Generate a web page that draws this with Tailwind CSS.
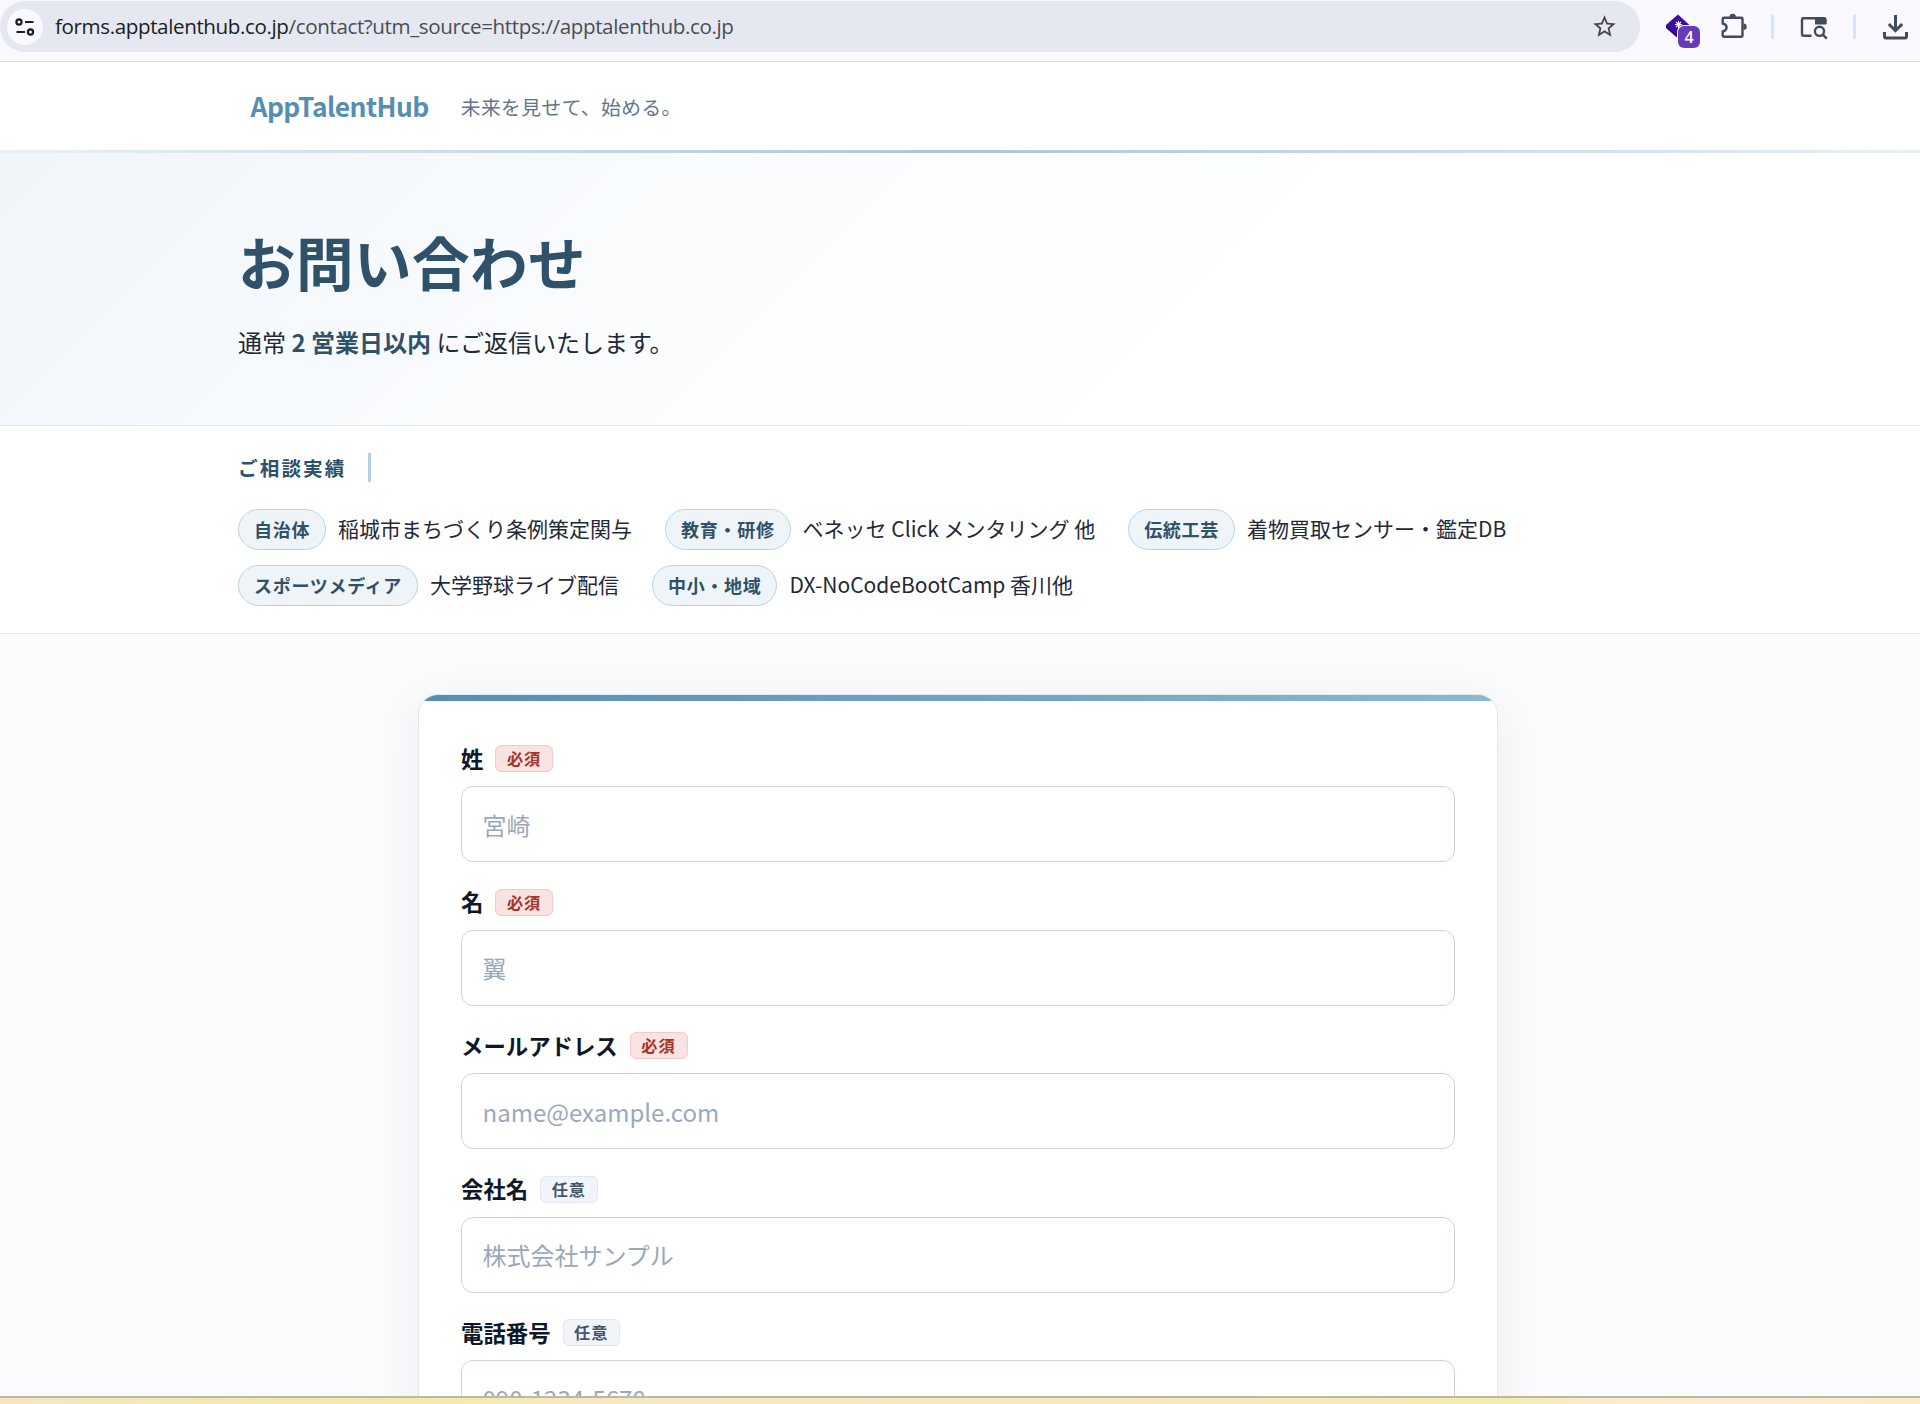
<!DOCTYPE html>
<html lang="ja">
<head>
    <meta charset="UTF-8">
    <meta name="viewport" content="width=device-width, initial-scale=1.0">
    <title>お問い合わせ | AppTalentHub</title>
    <script src="https://cdn.jsdelivr.net/npm/@tailwindcss/browser@4"></script>
</head>
<body class="h-[1404px] overflow-hidden bg-[#f9fbfd] font-['Noto_Sans_CJK_JP',sans-serif] text-[#1f2937] flex flex-col">
    <!-- Browser toolbar -->
    <div class="h-[62px] shrink-0 bg-[#faf9ff] border-b border-[#dcdcea] flex items-start pt-px">
        <div class="w-[1640px] h-[51px] rounded-[25px] bg-[#e5e8f1] flex items-center pl-[7px] pr-[22px]">
            <span class="w-9 h-9 rounded-full bg-[#faf9ff] flex items-center justify-center">
                <svg class="w-[20px] h-[20px]" viewBox="0 0 20 20" fill="none" stroke="#1c1d21" stroke-width="2.2">
                    <circle cx="4" cy="5" r="2.6" /><path d="M10 5h8.500M1.500 15H10" /><circle cx="15.500" cy="15" r="2.600" />
                </svg>
            </span>
            <span class="ml-3 text-[20.600px] tracking-[-0.390px] leading-none whitespace-nowrap text-[#1c1d21] font-['Open_Sans',sans-serif]">forms.apptalenthub.co.jp<span class="text-[#4a4d55]">/contact?utm_source=https://apptalenthub.co.jp</span></span>
            <svg class="ml-auto w-[27px] h-[27px]" viewBox="0 0 24 24" fill="#474747">
                <path d="M22 9.240l-7.190-.620L12 2 9.190 8.630 2 9.240l5.460 4.730L5.820 21 12 17.270 18.180 21l-1.630-7.030L22 9.240zM12 15.400l-3.760 2.270 1-4.280-3.320-2.880 4.380-.380L12 6.100l1.710 4.040 4.380.380-3.320 2.880 1 4.280L12 15.400z" />
            </svg>
        </div>
        <div class="relative ml-[25px] mt-[12px] w-[36px] h-[36px]">
            <svg class="w-[28px] h-[28px]" viewBox="0 0 28 28">
                <path d="M13 1.500L25.500 13 13 24.500 1 14V12z" fill="#4009a8" />
                <path d="M1 13v2l11 9.500 1-2z" fill="#22046b" />
                <path d="M13.500 8v7M10 11.500h7M11 9l5 5M16 9l-5 5" stroke="#fff" stroke-width="1.100" />
            </svg>
            <span class="absolute left-[13px] top-[13px] w-[22px] h-[22px] rounded-[6px] bg-[#673ab7] ring-1 ring-white text-white text-[16px] font-semibold leading-[23px] text-center font-['Open_Sans',sans-serif]">4</span>
        </div>
        <svg class="ml-[20px] mt-[12px] w-[27px] h-[27px]" viewBox="0 0 27 27" fill="none" stroke="#434a5b" stroke-width="2.400">
            <path d="M4 4.800H20.300Q21.500 4.800 21.500 6V22.500Q21.500 23.700 20.300 23.700H3Q1.700 23.700 1.700 22.500V18.500Q5.600 17.500 5.600 14.500T1.700 10.500V6Q1.700 4.800 3 4.800z" />
            <path d="M8.500 4a3.200 3.200 0 0 1 6.400 0zM22.500 10.500a3.200 3.200 0 0 1 0 6.400z" fill="#434a5b" stroke="none" />
        </svg>
        <span class="ml-[23px] mt-[13px] w-[3px] h-[25px] rounded-full bg-[#d7e3fc]"></span>
        <svg class="ml-[26px] mt-[14px] w-[28px] h-[26px]" viewBox="0 0 28 26" fill="none" stroke="#434a5b" stroke-width="2.400">
            <path d="M11.500 20.700H3.200Q2 20.700 2 19.500V4.500Q2 3.200 3.200 3.200H24.500Q25.500 3.200 25.500 4.500V9" />
            <path d="M15 3h11v6.500H15z" fill="#434a5b" stroke="none" />
            <circle cx="19.500" cy="16.300" r="4.600" /><path d="M22.800 19.600l4 4" />
        </svg>
        <span class="ml-[25px] mt-[13px] w-[3px] h-[25px] rounded-full bg-[#d7e3fc]"></span>
        <svg class="ml-[27px] mt-[13px] w-[25px] h-[26px] shrink-0" viewBox="0 0 25 26" fill="none" stroke="#434a5b" stroke-width="3">
            <path d="M12.500 1v15M5.800 10l6.700 6.700 6.700-6.700M1.500 18v4.500Q1.500 24 3 24H22Q23.500 24 23.500 22.500V18" />
        </svg>
    </div>

    <!-- Site header -->
    <header class="h-[88px] shrink-0 bg-white flex items-center pl-[250.500px]">
        <a class="text-[26.400px] tracking-[-0.540px] leading-none font-bold text-[#548eb3]">AppTalentHub</a>
        <p class="ml-8 pt-[2px] text-[19.800px] tracking-[0.400px] leading-none text-[#64748b]">未来を見せて、始める。</p>
    </header>
    <div class="h-[3px] shrink-0 bg-linear-to-r from-[#e8f0f5] via-[#a9c8da] to-[#e8f0f5]"></div>

    <!-- Hero -->
    <section class="h-[273px] shrink-0 border-b border-[#e2e8f0] bg-linear-135 from-[#f0f5fa] via-[#fafcfe] via-35% to-white to-65% pl-[238px]">
        <h1 class="pt-[66px] text-[57.600px] tracking-[0.400px] leading-[84px] font-bold text-[#2f5169]">お問い合わせ</h1>
        <p class="mt-[21px] text-[24px] leading-[36px]">通常 <strong class="text-[#2f5169]">2 営業日以内</strong> にご返信いたします。</p>
    </section>

    <!-- Track record -->
    <section class="h-[208px] shrink-0 bg-white border-b border-[#e2e8f0] pl-[238px] pt-[27px]">
        <h2 class="w-[133px] h-[29px] border-r-3 border-[#b5d2e3] text-[19.600px] tracking-[2.100px] leading-[30px] font-bold text-[#2f5169]">ご相談実績</h2>
        <ul class="mt-[27px] w-[1442px] flex flex-wrap gap-x-[33px] gap-y-[15px] text-[21px]">
            <li class="flex items-center gap-3"><span class="h-[41px] px-[15px] rounded-full border border-[#b9d5e4] bg-[#eff4f9] text-[18px] tracking-[0.700px] leading-[39px] font-bold text-[#2f5169]">自治体</span><span class="pb-[2px]">稲城市まちづくり条例策定関与</span></li>
            <li class="flex items-center gap-3"><span class="h-[41px] px-[15px] rounded-full border border-[#b9d5e4] bg-[#eff4f9] text-[18px] tracking-[0.700px] leading-[39px] font-bold text-[#2f5169]">教育・研修</span><span class="pb-[2px]">ベネッセ Click メンタリング 他</span></li>
            <li class="flex items-center gap-3"><span class="h-[41px] px-[15px] rounded-full border border-[#b9d5e4] bg-[#eff4f9] text-[18px] tracking-[0.700px] leading-[39px] font-bold text-[#2f5169]">伝統工芸</span><span class="pb-[2px]">着物買取センサー・鑑定DB</span></li>
            <li class="flex items-center gap-3"><span class="h-[41px] px-[15px] rounded-full border border-[#b9d5e4] bg-[#eff4f9] text-[18px] tracking-[0.700px] leading-[39px] font-bold text-[#2f5169]">スポーツメディア</span><span class="pb-[2px]">大学野球ライブ配信</span></li>
            <li class="flex items-center gap-3"><span class="h-[41px] px-[15px] rounded-full border border-[#b9d5e4] bg-[#eff4f9] text-[18px] tracking-[0.700px] leading-[39px] font-bold text-[#2f5169]">中小・地域</span><span class="pb-[2px]">DX-NoCodeBootCamp 香川他</span></li>
        </ul>
    </section>

    <!-- Contact form -->
    <main class="h-[762px] shrink-0 overflow-hidden pt-[60px]">
        <form class="ml-[418px] w-[1080px] h-[1200px] rounded-[20px] border border-[#e2e8f0] bg-white overflow-hidden shadow-[0_10px_48px_rgba(15,23,42,0.06)]">
            <div class="h-[6px] bg-linear-to-r from-[#548eb3] to-[#8ab8d1]"></div>
            <div class="px-[42px] pt-[43.500px]">
                <div class="h-[143.500px]">
                    <label class="flex items-center h-[28px] gap-3 text-[22.400px] font-bold text-[#0f172a]">姓<span class="h-[27px] pl-[10.500px] pr-[11px] rounded-[6px] border border-[#f5c9c9] bg-[#f9e2e2] text-[16.200px] tracking-[1px] leading-[25px] font-bold text-[#a93226]">必須</span></label>
                    <input type="text" placeholder="宮崎" class="mt-[13.900px] block w-full h-[76px] px-[20.500px] rounded-[12px] border border-[#cbd5e1] text-[24px] placeholder:text-[#9aa8bc]">
                </div>
                <div class="h-[143.500px]">
                    <label class="flex items-center h-[28px] gap-3 text-[22.400px] font-bold text-[#0f172a]">名<span class="h-[27px] pl-[10.500px] pr-[11px] rounded-[6px] border border-[#f5c9c9] bg-[#f9e2e2] text-[16.200px] tracking-[1px] leading-[25px] font-bold text-[#a93226]">必須</span></label>
                    <input type="text" placeholder="翼" class="mt-[13.900px] block w-full h-[76px] px-[20.500px] pb-px rounded-[12px] border border-[#cbd5e1] text-[24px] placeholder:text-[#9aa8bc]">
                </div>
                <div class="h-[143.500px]">
                    <label class="flex items-center h-[28px] gap-3 text-[22.400px] font-bold text-[#0f172a]">メールアドレス<span class="h-[27px] pl-[10.500px] pr-[11px] rounded-[6px] border border-[#f5c9c9] bg-[#f9e2e2] text-[16.200px] tracking-[1px] leading-[25px] font-bold text-[#a93226]">必須</span></label>
                    <input type="email" placeholder="name@example.com" class="mt-[13.900px] block w-full h-[76px] px-[20.500px] rounded-[12px] border border-[#cbd5e1] text-[24px] placeholder:text-[#9aa8bc]">
                </div>
                <div class="h-[143.500px]">
                    <label class="flex items-center h-[28px] gap-3 text-[22.400px] font-bold text-[#0f172a]">会社名<span class="h-[27px] pl-[10.500px] pr-[11px] rounded-[6px] border border-[#e2e8f0] bg-[#f1f5f9] text-[16.200px] tracking-[1px] leading-[25px] font-bold text-[#475569]">任意</span></label>
                    <input type="text" placeholder="株式会社サンプル" class="mt-[13.900px] block w-full h-[76px] px-[20.500px] pb-px rounded-[12px] border border-[#cbd5e1] text-[24px] placeholder:text-[#9aa8bc]">
                </div>
                <div class="h-[143.500px]">
                    <label class="flex items-center h-[28px] gap-3 text-[22.400px] font-bold text-[#0f172a]">電話番号<span class="h-[27px] pl-[10.500px] pr-[11px] rounded-[6px] border border-[#e2e8f0] bg-[#f1f5f9] text-[16.200px] tracking-[1px] leading-[25px] font-bold text-[#475569]">任意</span></label>
                    <input type="tel" placeholder="090-1234-5678" class="mt-[13.900px] block w-full h-[76px] px-[20.500px] rounded-[12px] border border-[#cbd5e1] text-[24px] placeholder:text-[#9aa8bc]">
                </div>
            </div>
        </form>
    </main>

    <!-- Desktop strip under the window -->
    <div class="h-[8px] shrink-0 border-t-2 border-[#bfb89e] bg-[linear-gradient(90deg,#f5e6c0_0%,#f3eaae_23%,#f5e9c4_30%,#f5e9bc_68%,#f2edae_78%,#faecca_83%,#faecd4_92%,#f9edc4_100%)]"></div>
</body>
</html>
